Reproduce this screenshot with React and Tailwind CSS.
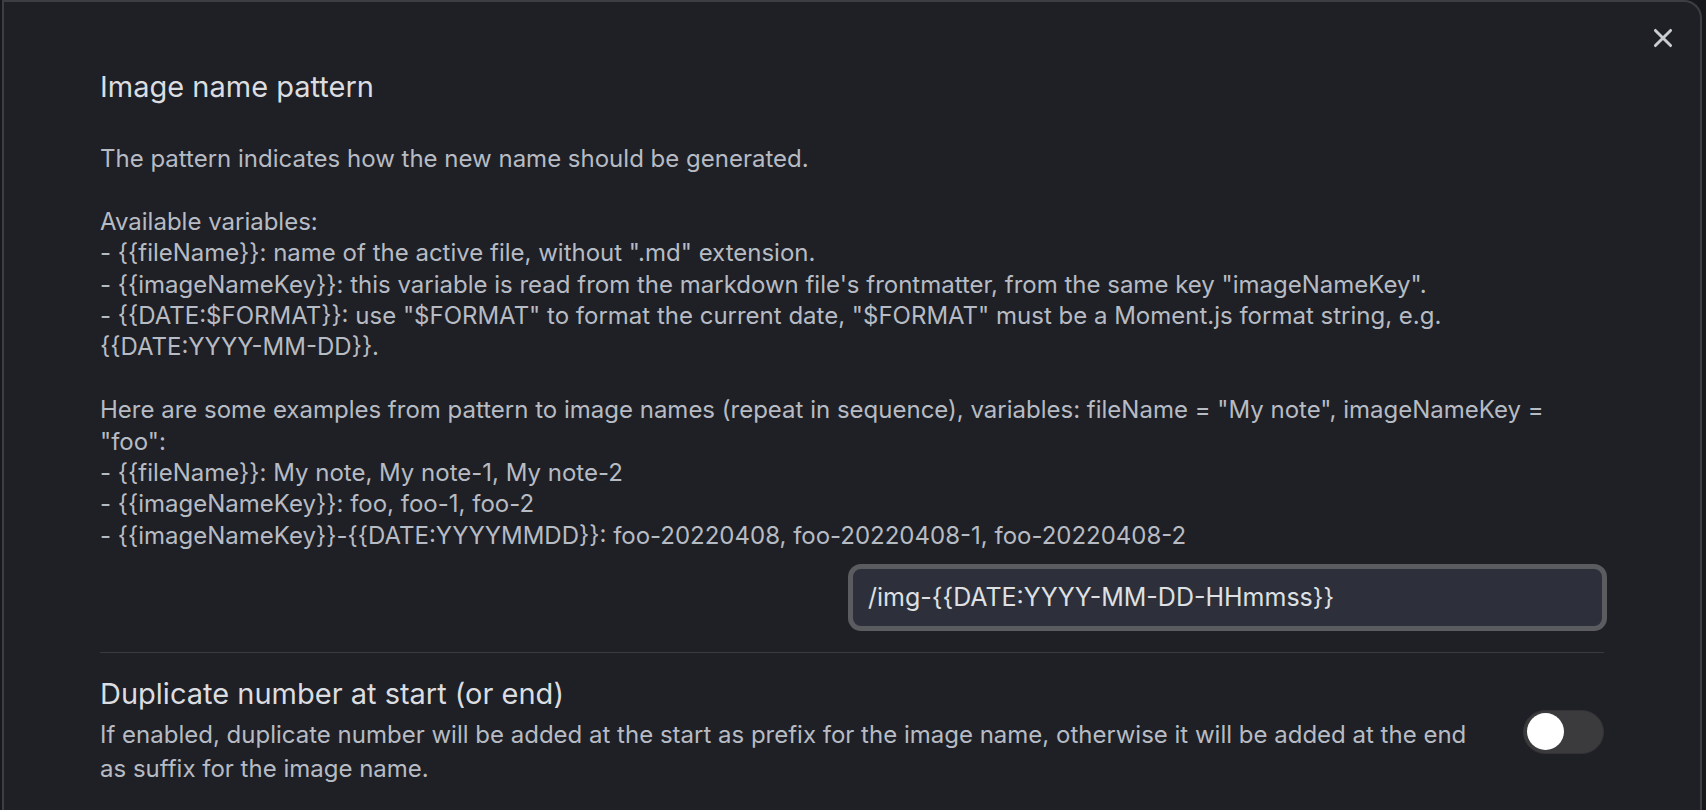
import React from "react";

export default function App() {
  const font = { fontFamily: 'Inter, "Noto Sans", sans-serif' };
  return (
    <div className="w-[1706px] h-[810px] overflow-hidden bg-[#17181c] flex" style={font}>
      <div className="ml-[2px] w-[1700px] h-[840px] shrink-0 border-t-2 border-x-2 border-[#3d3e43] rounded-tr-[18px] bg-[#1e2025] relative">
        <button className="absolute right-[23px] top-[22px] w-[28px] h-[28px] flex items-center justify-center text-[#c9ccd2]">
          <svg width="26" height="26" viewBox="0 0 24 24" fill="none" stroke="currentColor" strokeWidth="2.7" strokeLinecap="round">
            <path d="M5 5 L19 19 M19 5 L5 19" />
          </svg>
        </button>
        <div className="px-[96px] pt-[68px]">
          <div className="flex flex-col">
            <div className="text-[29px] leading-[34px] text-[#dcdde0]">Image name pattern</div>
            <div className="mt-[39px] w-[1460px] text-[24px] leading-[31.4px] text-[#b7bbc4] whitespace-pre-wrap">
{`The pattern indicates how the new name should be generated.

Available variables:
- {{fileName}}: name of the active file, without ".md" extension.
- {{imageNameKey}}: this variable is read from the markdown file's frontmatter, from the same key "imageNameKey".
- {{DATE:$FORMAT}}: use "$FORMAT" to format the current date, "$FORMAT" must be a Moment.js format string, e.g. {{DATE:YYYY-MM-DD}}.

Here are some examples from pattern to image names (repeat in sequence), variables: fileName = "My note", imageNameKey = "foo":
- {{fileName}}: My note, My note-1, My note-2
- {{imageNameKey}}: foo, foo-1, foo-2
- {{imageNameKey}}-{{DATE:YYYYMMDD}}: foo-20220408, foo-20220408-1, foo-20220408-2`}
            </div>
            <div className="mt-[13px] flex justify-end -mr-[3px]">
              <div className="w-[759px] h-[67px] rounded-[13px] border-[5px] border-[#5b5c60] bg-[#2d303a] flex items-center px-[15px] text-[25px] text-[#dfe0e3]">
                /img-{"{{"}DATE:YYYY-MM-DD-HHmmss{"}}"}
              </div>
            </div>
          </div>
          <div className="mt-[21px] border-t border-[#3a3b40]" />
          <div className="flex items-center py-[24px]">
            <div className="w-[1380px]">
              <div className="text-[29px] leading-[34px] text-[#dcdde0]">Duplicate number at start (or end)</div>
              <div className="mt-[7px] text-[24px] leading-[34px] text-[#b7bbc4]">
                If enabled, duplicate number will be added at the start as prefix for the image name, otherwise it will be added at the end as suffix for the image name.
              </div>
            </div>
            <div className="ml-auto w-[81px] h-[44px] rounded-full bg-[#3b3b3d] border border-[#333335] flex items-center px-[3px]">
              <div className="w-[37px] h-[37px] rounded-full bg-white" />
            </div>
          </div>
          <div className="border-t border-[#3a3b40]" />
        </div>
      </div>
    </div>
  );
}
